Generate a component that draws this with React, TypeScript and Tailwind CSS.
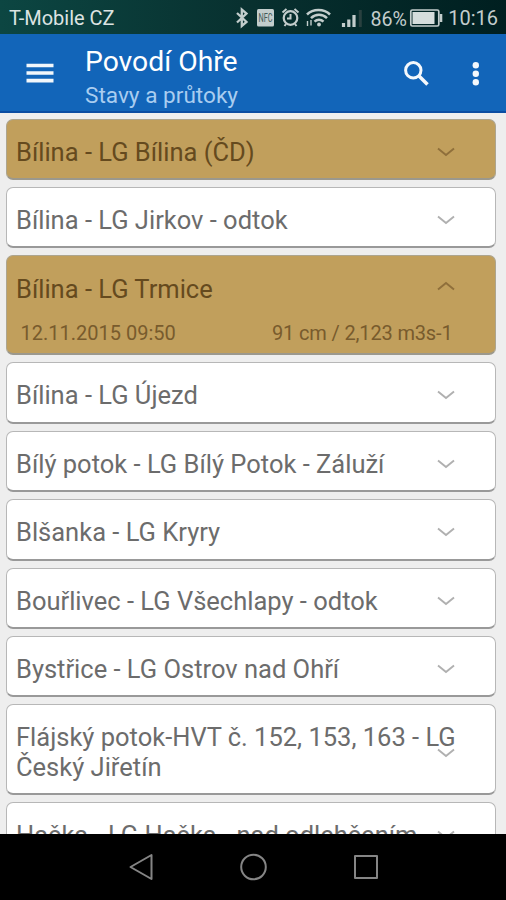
import React from "react";

type Station = { name: string; alert?: boolean; time?: string; value?: string; tall?: boolean };

const stations: Station[] = [
  { name: "Bílina - LG Bílina (ČD)", alert: true },
  { name: "Bílina - LG Jirkov - odtok" },
  { name: "Bílina - LG Trmice", alert: true, time: "12.11.2015 09:50", value: "91 cm / 2,123 m3s-1" },
  { name: "Bílina - LG Újezd" },
  { name: "Bílý potok - LG Bílý Potok - Záluží" },
  { name: "Blšanka - LG Kryry" },
  { name: "Bouřlivec - LG Všechlapy - odtok" },
  { name: "Bystřice - LG Ostrov nad Ohří" },
  { name: "Flájský potok-HVT č. 152, 153, 163 - LG Český Jiřetín", tall: true },
  { name: "Hačka - LG Hačka - nad odlehčením" },
];

function StatusIcons() {
  return (
    <svg width="216" height="34" viewBox="232 0 216 34" className="shrink-0" fill="none" stroke="#c3cdcc">
      {/* bluetooth */}
      <path d="M237 13l9.500 9-4.700 4V9.500l4.700 4-9.500 9" strokeWidth="2.300" />
      {/* NFC badge */}
      <rect x="257" y="9" width="17" height="17.500" rx="1.500" fill="#c3cdcc" stroke="none" />
      <text x="265.500" y="22" textAnchor="middle" textLength="14" lengthAdjust="spacingAndGlyphs" fontFamily="Roboto, sans-serif" fontSize="12" fill="#435b5a" stroke="none">NFC</text>
      {/* alarm */}
      <circle cx="290.500" cy="18" r="6.800" strokeWidth="2.200" />
      <path d="M290.500 14v4.500h-3.500M282.500 12.500l4-3.500M298.500 12.500l-4-3.500M286 24l-1.500 2M295 24l1.500 2" strokeWidth="2" />
      {/* wifi with traffic arrows */}
      <path d="M307 14.500c6-6 17-6 23 0M311 18.200c4.500-4.500 11.500-4.500 16 0M314.500 21.700c2.500-2.500 6.500-2.500 9 0" strokeWidth="2.500" />
      <circle cx="319" cy="24.500" r="1.900" fill="#c3cdcc" stroke="none" />
      <path d="M307.500 21v5M311 20v5.500" strokeWidth="1.400" />
      {/* signal */}
      <path d="M343.500 23v4M348.800 19.500V27M354 15v12" strokeWidth="3.200" />
      <path d="M360.300 10v17" stroke="#29403f" strokeWidth="3" />
      <text x="370.500" y="25.500" textLength="36.500" lengthAdjust="spacingAndGlyphs" fontFamily="Roboto, sans-serif" fontSize="20" fill="#c3cdcc" stroke="none">86%</text>
      {/* battery */}
      <rect x="410.800" y="10" width="28" height="16" rx="1.500" strokeWidth="1.700" />
      <rect x="412.500" y="12" width="22" height="12" fill="#d5dddc" stroke="none" />
      <path d="M441 14v8" strokeWidth="2.600" />
    </svg>
  );
}

function Chevron({ s }: { s: Station }) {
  const top = s.time ? "top-[24px]" : s.tall ? "top-[42px]" : "top-[26px]";
  return (
    <svg width="20" height="12" viewBox="0 0 20 12" fill="none" className={`absolute right-[39.500px] ${top}`}>
      <path
        d={s.time ? "M2 9.500l8-6.500 8 6.500" : "M2 2.500l8 6.500 8-6.500"}
        stroke={s.alert ? "#8f6f3b" : "#b0b0b0"}
        strokeWidth="1.900"
      />
    </svg>
  );
}

function Card({ s }: { s: Station }) {
  const size = s.time ? "h-[99.9px] pt-[18px]" : s.tall ? "h-[91px] pt-[17px]" : "h-[61.4px] pt-[17px]";
  const color = s.alert
    ? "bg-[#c19f5c] border-[#ada58f] border-b-[#9b988d] text-[#654a1e]"
    : "bg-white border-[#b7b7b7] border-b-[#999999] text-[#6c6c6c]";
  return (
    <div className={`relative shrink-0 rounded-[7px] border-[1.500px] border-b-2 pl-[9px] ${size} ${color}`}>
      <div className="w-[450px] text-[25.500px] leading-[30px]">{s.name}</div>
      {s.time && (
        <div className="mt-[16px] flex w-[436.500px] justify-between pl-[4.500px] text-[20px] leading-[26px] text-[#785b2d]">
          <span>{s.time}</span>
          <span className="tracking-[-0.150px]">{s.value}</span>
        </div>
      )}
      <Chevron s={s} />
    </div>
  );
}

export default function App() {
  return (
    <div className="flex h-[900px] w-[506px] flex-col overflow-hidden bg-[#eeeeee] font-['Roboto',sans-serif]">
      <div className="flex h-[34px] shrink-0 items-center justify-between bg-gradient-to-r from-[#0c4642] via-[#08302f] to-[#001f20] pl-[9px] pr-[8px] text-[20px] text-[#dce3e2]">
        <span className="whitespace-nowrap pt-[2px]">T-Mobile CZ</span>
        <div className="flex items-center">
          <StatusIcons />
          <span className="w-[50px] whitespace-nowrap pt-[2px] text-right text-[#c3cdcc]">10:16</span>
        </div>
      </div>
      <header className="flex h-[79px] shrink-0 items-start border-b-[2px] border-[#0b4da2] bg-[#1265b9] text-white">
        <svg width="85" height="77" viewBox="0 0 85 77" className="shrink-0">
          <path d="M26.500 31.500h27M26.500 39h27M26.500 46.700h27" stroke="#f2f7fb" strokeWidth="3.700" />
        </svg>
        <div className="flex-1 pt-[11px]">
          <div className="text-[28.300px] leading-[33px]">Povodí Ohře</div>
          <div className="mt-[4px] text-[22.600px] leading-[28px] text-[#a9cdf0]">Stavy a průtoky</div>
        </div>
        <svg width="106" height="77" viewBox="400 34 106 77" className="shrink-0" fill="none">
          <circle cx="413.300" cy="70.300" r="7.700" stroke="#f4f8fc" strokeWidth="3" />
          <path d="M418.500 75.500l9 9" stroke="#f4f8fc" strokeWidth="3.600" />
          <g fill="#f4f8fc"><circle cx="475.800" cy="65.200" r="3.200" /><circle cx="475.800" cy="73.700" r="3.200" /><circle cx="475.800" cy="82.200" r="3.200" /></g>
        </svg>
      </header>
      <main className="flex min-h-0 flex-1 flex-col gap-[7px] overflow-hidden pl-[6px] pr-[10px] pt-[5.700px]">
        {stations.map((s) => <Card key={s.name} s={s} />)}
      </main>
      <nav className="flex h-[66px] shrink-0 bg-black">
        <svg width="506" height="66" viewBox="0 834 506 66" fill="none" stroke="#858585" strokeWidth="2" strokeLinejoin="round">
          <path d="M130.500 867l21-12v24z" />
          <circle cx="253.500" cy="867" r="12.300" />
          <rect x="355" y="856" width="22" height="22" />
        </svg>
      </nav>
    </div>
  );
}
